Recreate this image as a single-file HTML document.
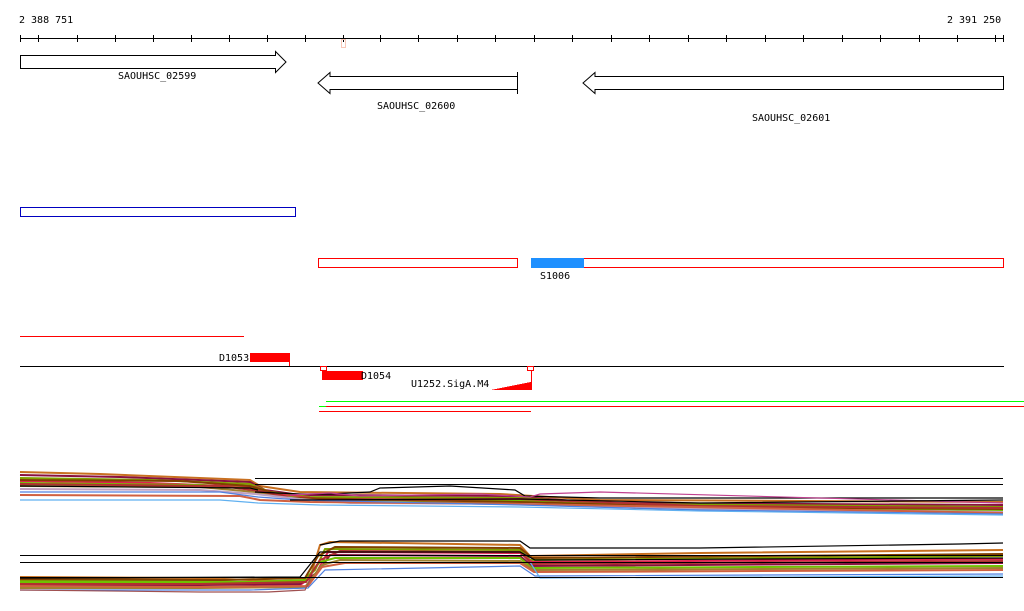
<!DOCTYPE html>
<html><head><meta charset="utf-8"><style>
html,body{margin:0;padding:0;background:#fff;width:1024px;height:611px;overflow:hidden}
svg{display:block}
text{font-family:"DejaVu Sans Mono","Liberation Mono",monospace;font-size:10px;fill:#000}
</style></head><body>
<svg width="1024" height="611" xmlns="http://www.w3.org/2000/svg" shape-rendering="crispEdges">
<text x="19" y="23">2 388 751</text>
<text x="947" y="23">2 391 250</text>
<line x1="20" y1="38.5" x2="1004" y2="38.5" stroke="#000"/>
<g stroke="#000">
<line x1="20.5" y1="35" x2="20.5" y2="42"/>
<line x1="38.5" y1="35" x2="38.5" y2="42"/><line x1="77.5" y1="35" x2="77.5" y2="42"/><line x1="115.5" y1="35" x2="115.5" y2="42"/><line x1="153.5" y1="35" x2="153.5" y2="42"/><line x1="191.5" y1="35" x2="191.5" y2="42"/><line x1="229.5" y1="35" x2="229.5" y2="42"/><line x1="267.5" y1="35" x2="267.5" y2="42"/><line x1="305.5" y1="35" x2="305.5" y2="42"/><line x1="343.5" y1="35" x2="343.5" y2="42"/><line x1="380.5" y1="35" x2="380.5" y2="42"/><line x1="418.5" y1="35" x2="418.5" y2="42"/><line x1="457.5" y1="35" x2="457.5" y2="42"/><line x1="495.5" y1="35" x2="495.5" y2="42"/><line x1="534.5" y1="35" x2="534.5" y2="42"/><line x1="572.5" y1="35" x2="572.5" y2="42"/><line x1="611.5" y1="35" x2="611.5" y2="42"/><line x1="649.5" y1="35" x2="649.5" y2="42"/><line x1="688.5" y1="35" x2="688.5" y2="42"/><line x1="726.5" y1="35" x2="726.5" y2="42"/><line x1="765.5" y1="35" x2="765.5" y2="42"/><line x1="803.5" y1="35" x2="803.5" y2="42"/><line x1="842.5" y1="35" x2="842.5" y2="42"/><line x1="880.5" y1="35" x2="880.5" y2="42"/><line x1="919.5" y1="35" x2="919.5" y2="42"/><line x1="957.5" y1="35" x2="957.5" y2="42"/><line x1="995.5" y1="35" x2="995.5" y2="42"/><line x1="1003.5" y1="35" x2="1003.5" y2="42"/>
</g>
<rect x="341.5" y="39.5" width="4" height="8" fill="none" stroke="#f8c8b8"/>
<g fill="#fff" stroke="#000" shape-rendering="auto">
<polygon points="20.5,55.5 275.5,55.5 275.5,51.5 286,62 275.5,72.5 275.5,68.5 20.5,68.5"/>
<polygon points="517.5,76.5 330,76.5 330,72.5 318,83 330,93.5 330,89.5 517.5,89.5"/>
<line x1="517.5" y1="72" x2="517.5" y2="94"/>
<polygon points="1003.5,76.5 595,76.5 595,72.5 583,83 595,93.5 595,89.5 1003.5,89.5"/>
</g>
<text x="118" y="79">SAOUHSC_02599</text>
<text x="377" y="109">SAOUHSC_02600</text>
<text x="752" y="121">SAOUHSC_02601</text>
<rect x="20.5" y="207.5" width="275" height="9" fill="none" stroke="#0000c0"/>
<rect x="318.5" y="258.5" width="199" height="9" fill="none" stroke="#f00"/>
<rect x="531.5" y="258.5" width="472" height="9" fill="none" stroke="#f00"/>
<rect x="531" y="258" width="53" height="10" fill="#1e90ff"/>
<text x="540" y="279">S1006</text>
<line x1="20" y1="336.5" x2="244" y2="336.5" stroke="#f00"/>
<text x="219" y="361">D1053</text>
<rect x="250" y="353" width="40" height="9" fill="#f00"/>
<line x1="289.5" y1="353" x2="289.5" y2="366" stroke="#f00"/>
<line x1="20" y1="366.5" x2="1004" y2="366.5" stroke="#000"/>
<rect x="320.5" y="366.5" width="6" height="4" fill="none" stroke="#f00"/>
<rect x="322" y="371" width="41" height="9" fill="#f00"/>
<text x="361" y="379">D1054</text>
<text x="411" y="387">U1252.SigA.M4</text>
<rect x="527.5" y="366.5" width="6" height="4" fill="none" stroke="#f00"/>
<polygon points="491,390 531,382 531,370 532,370 532,390" fill="#f00"/>
<line x1="326" y1="401.5" x2="1024" y2="401.5" stroke="#0f0"/>
<line x1="319" y1="406.5" x2="326" y2="406.5" stroke="#0f0"/>
<line x1="326" y1="406.5" x2="1024" y2="406.5" stroke="#f00"/>
<line x1="319" y1="411.5" x2="531" y2="411.5" stroke="#f00"/>
<g fill="none" stroke-width="2" shape-rendering="auto">
<polyline stroke="#c87020" points="20,472 100,474 250,480 260,486 300,492 500,494 600,500 1003,502"/>
<polyline stroke="#8a1040" points="20,475 120,477 250,482 265,490 300,495 510,496 600,503 1003,505"/>
<polyline stroke="#80a000" points="20,478 150,480 250,484 270,492 310,497 520,498 620,504 1003,507"/>
<polyline stroke="#e02050" points="20,481 150,483 255,487 275,494 320,499 520,500 620,506 1003,509"/>
<polyline stroke="#70c000" points="20,483 200,485 255,489 280,496 320,500 520,501 640,506 1003,510"/>
<polyline stroke="#a08030" points="20,486 200,487 255,492 285,497 330,502 520,503 640,508 1003,512"/>
<polyline stroke="#804000" points="20,480 180,481 250,486 290,498 520,502 700,507 1003,509"/>
<polyline stroke="#b03030" points="20,484 220,486 260,491 300,500 520,499 700,506 1003,508"/>
<polyline stroke="#c0a0c0" points="20,489 200,490 255,494 300,499 350,503 530,504 700,509 1003,512"/>
<polyline stroke="#d06040" points="20,495 240,496 260,500 310,502 520,504 800,509 1003,513"/>
</g>
<g fill="none" stroke-width="1.2" shape-rendering="auto">
<polyline stroke="#5080e0" points="20,492 220,492 258,497 300,500 520,505 700,510 1003,514"/>
<polyline stroke="#60b0f0" points="20,500 220,500 258,503 320,505 520,507 700,511 1003,515"/>
<polyline stroke="#000" points="255,492 300,494 330,494 370,492 380,488 450,486 515,490 525,496 600,498 1003,498"/>
<polyline stroke="#c04090" points="290,495 330,493 360,496 480,494 530,497 540,494 600,492 1003,503"/>
<polyline stroke="#000" points="20,486 250,488 258,490"/>
<polyline stroke="#000" points="290,500 520,499 700,503 1003,500"/>
</g>
<g fill="none" stroke-width="2" shape-rendering="auto">
<polyline stroke="#c87020" points="20,577 200,578 300,582 310,578 320,545 330,542 520,545 530,556 700,553 1003,550"/>
<polyline stroke="#80a000" points="20,580 200,581 300,583 315,570 325,549 520,550 530,560 1003,556"/>
<polyline stroke="#e02050" points="20,583 200,583 300,585 315,575 328,552 520,553 532,562 1003,559"/>
<polyline stroke="#8a1040" points="20,585 200,585 300,584 318,572 330,555 520,556 532,566 1003,563"/>
<polyline stroke="#70c000" points="20,582 250,582 305,580 320,562 335,558 520,558 532,568 1003,566"/>
<polyline stroke="#a08030" points="20,588 200,588 305,587 322,565 340,560 520,561 534,570 1003,568"/>
<polyline stroke="#d06040" points="20,586 200,587 308,586 322,567 345,563 520,563 534,572 1003,570"/>
<polyline stroke="#804000" points="20,579 220,580 305,578 318,556 335,547 520,548 532,558 1003,554"/>
<polyline stroke="#b03030" points="20,584 200,584 306,582 320,560 340,551 520,552 532,564 1003,561"/>
</g>
<g fill="none" stroke-width="1.2" shape-rendering="auto">
<polyline stroke="#5080e0" points="20,590 250,590 308,588 325,570 520,566 535,576 1003,574"/>
<polyline stroke="#60b0f0" points="530,562 540,578 1003,576"/>
<polyline stroke="#000" points="320,545 340,541 520,541 530,548 700,548 960,544 1003,543"/>
<polyline stroke="#000" points="20,578 300,577 320,552 520,552 535,560 1003,558"/>
<polyline stroke="#a05050" points="20,590 200,592 268,592 305,590 310,580"/>
</g>
<g stroke="#000">
<line x1="255" y1="478.5" x2="1003" y2="478.5"/>
<line x1="255" y1="484.5" x2="1003" y2="484.5"/>
<line x1="20" y1="555.5" x2="1003" y2="555.5"/>
<line x1="20" y1="562.5" x2="1003" y2="562.5"/>
<line x1="20" y1="577.5" x2="1003" y2="577.5"/>
</g>
</svg>
</body></html>
